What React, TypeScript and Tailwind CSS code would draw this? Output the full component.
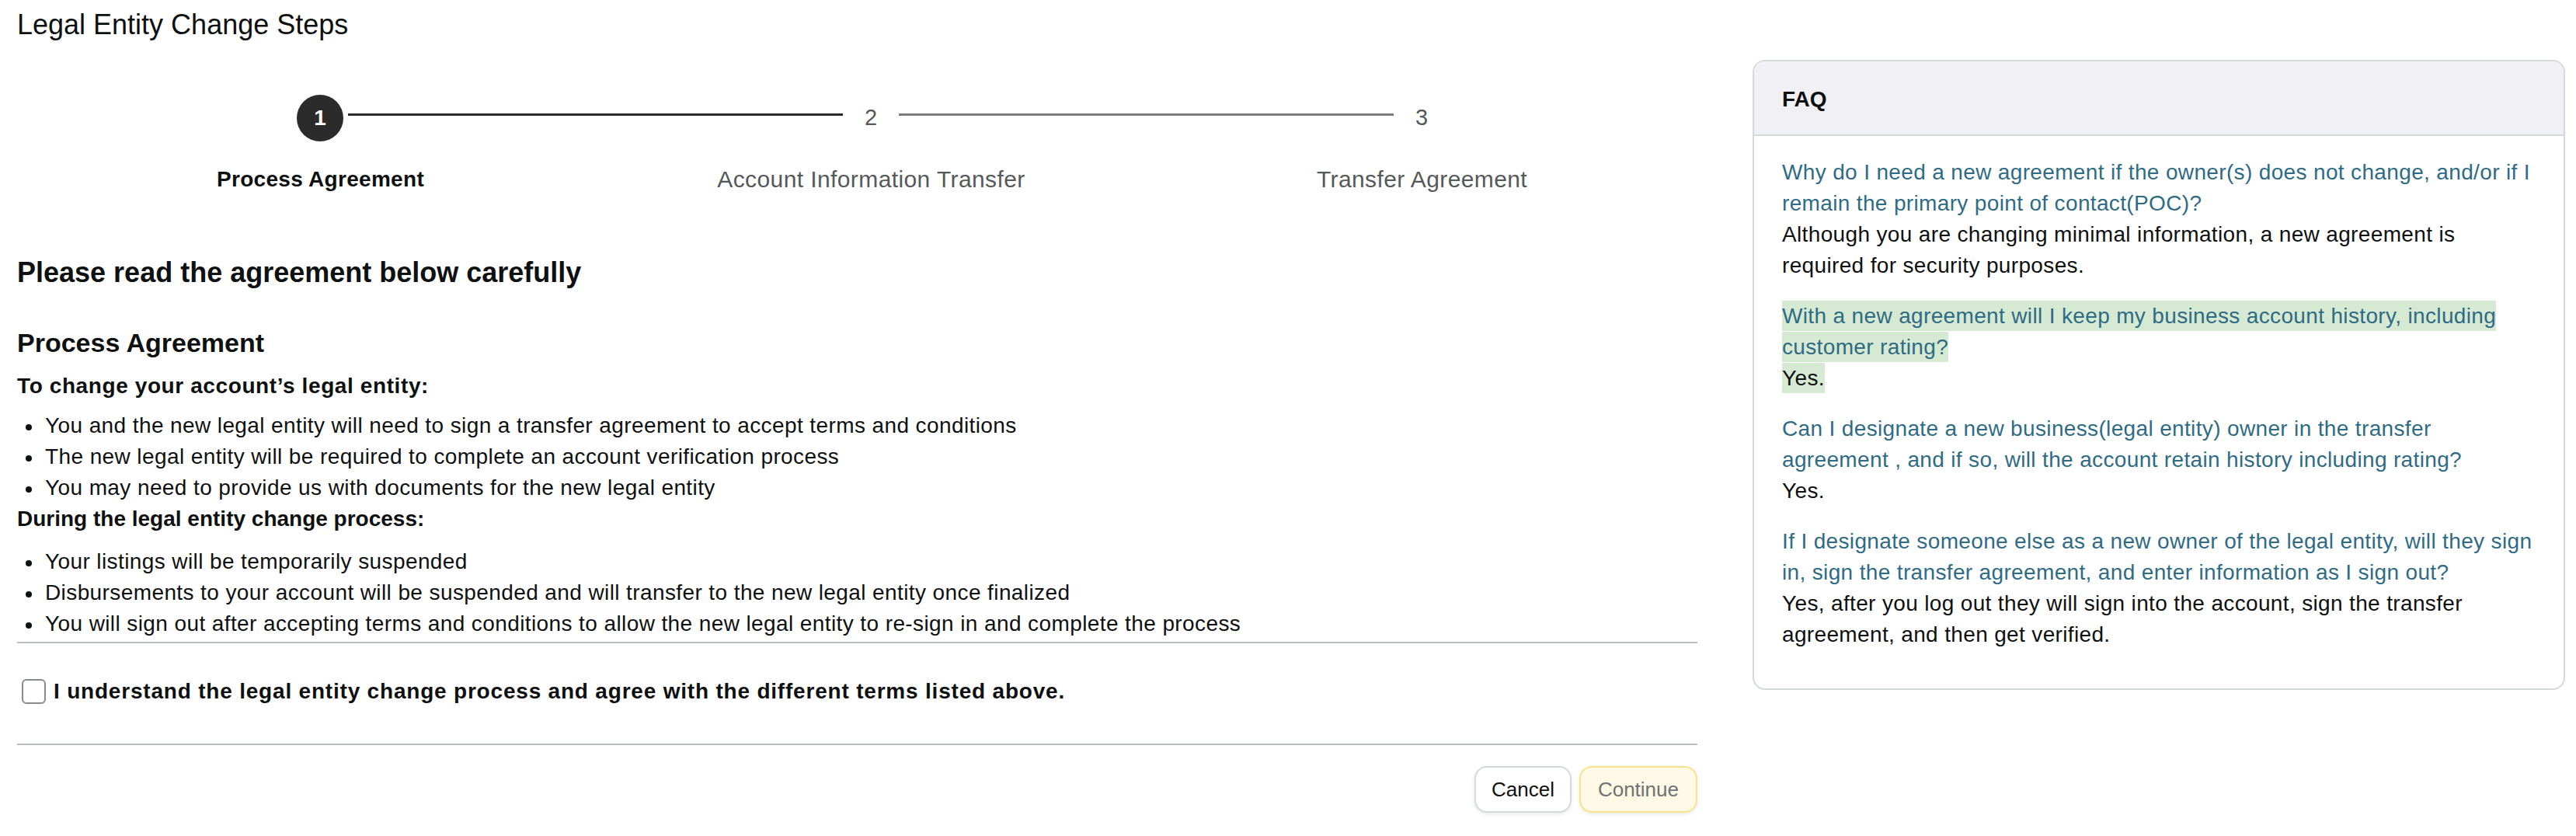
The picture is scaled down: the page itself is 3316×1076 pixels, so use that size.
import React from "react"

const steps = ["Process Agreement", "Account Information Transfer", "Transfer Agreement"]

const changeItems = [
  "You and the new legal entity will need to sign a transfer agreement to accept terms and conditions",
  "The new legal entity will be required to complete an account verification process",
  "You may need to provide us with documents for the new legal entity",
]

const processItems = [
  "Your listings will be temporarily suspended",
  "Disbursements to your account will be suspended and will transfer to the new legal entity once finalized",
  "You will sign out after accepting terms and conditions to allow the new legal entity to re-sign in and complete the process",
]

const faqs = [
  {
    q: "Why do I need a new agreement if the owner(s) does not change, and/or if I remain the primary point of contact(POC)?",
    a: "Although you are changing minimal information, a new agreement is required for security purposes.",
  },
  {
    q: "With a new agreement will I keep my business account history, including customer rating?",
    a: "Yes.",
    highlight: true,
  },
  {
    q: "Can I designate a new business(legal entity) owner in the transfer agreement , and if so, will the account retain history including rating?",
    a: "Yes.",
  },
  {
    q: "If I designate someone else as a new owner of the legal entity, will they sign in, sign the transfer agreement, and enter information as I sign out?",
    a: "Yes, after you log out they will sign into the account, sign the transfer agreement, and then get verified.",
  },
]

function BulletList({ items, className = "" }: { items: string[]; className?: string }) {
  return (
    <ul className={className}>
      {items.map((item) => (
        <li key={item} className="flex leading-[40px] tracking-[0.4px]">
          <span className="w-[36px] shrink-0 pl-[11px] pt-[18px]">
            <span className="block h-[8px] w-[8px] rounded-full bg-[#0f1111]" />
          </span>
          <span>{item}</span>
        </li>
      ))}
    </ul>
  )
}

function Stepper() {
  return (
    <div className="mt-[66px]">
      <div className="ml-[360px] flex h-[60px] items-center">
        <div className="flex h-[60px] w-[60px] items-center justify-center rounded-full bg-[#2b2b2b] text-[28px] font-bold text-white">
          1
        </div>
        <div className="mx-[6px] mb-[9px] h-[3px] w-[637px] bg-[#2b2b2b]" />
        <div className="w-[60px] text-center text-[29px] text-[#565959]">2</div>
        <div className="mx-[6px] mb-[9px] h-[3px] w-[637px] bg-[#7d7d7d]" />
        <div className="w-[60px] text-center text-[29px] text-[#565959]">3</div>
      </div>
      <div className="ml-[36px] mt-[29px] grid w-[2127px] grid-cols-3 text-center leading-[40px]">
        {steps.map((s, i) => (
          <div
            key={s}
            className={
              i === 0
                ? "text-[28px] font-bold tracking-[0.3px] text-[#0f1111]"
                : "text-[30px] tracking-[0.4px] text-[#565959]"
            }
          >
            {s}
          </div>
        ))}
      </div>
    </div>
  )
}

function FaqCard() {
  return (
    <aside className="mt-[69px] w-[1046px] overflow-hidden rounded-[16px] border-2 border-[#d5d9d9] bg-white">
      <div className="border-b-2 border-[#d5d9d9] bg-[#f1f1f5] pb-[25px] pl-[36px] pt-[29px] text-[28px] font-bold leading-[40px]">
        FAQ
      </div>
      <div className="pb-[24px] pl-[36px] pr-[30px] pt-[27px] text-[28px] leading-[40px] tracking-[0.35px]">
        {faqs.map((f) => (
          <div key={f.q} className="mb-[25px]">
            <div className="text-[#2f6b85]">
              <span className={f.highlight ? "bg-[#d6e9d3] py-[4px] box-decoration-clone" : ""}>{f.q}</span>
            </div>
            <div className="text-[#0f1111]">
              <span className={f.highlight ? "bg-[#d6e9d3] py-[4px] box-decoration-clone" : ""}>{f.a}</span>
            </div>
          </div>
        ))}
      </div>
    </aside>
  )
}

export default function App() {
  return (
    <div className="min-h-screen bg-white pl-[22px] pt-[8px] font-['Liberation_Sans',Arial,sans-serif] text-[28px] text-[#0f1111]">
      <div className="flex items-start gap-[71px]">
        <div className="w-[2163px]">
          <h1 className="text-[36px] leading-[48px]">Legal Entity Change Steps</h1>

          <Stepper />

          <h2 className="mt-[76px] text-[36px] font-bold leading-[48px]">Please read the agreement below carefully</h2>
          <h3 className="mt-[42px] text-[34px] font-bold leading-[48px]">Process Agreement</h3>

          <p className="mt-[12px] font-bold leading-[40px] tracking-[0.6px]">To change your account’s legal entity:</p>
          <BulletList items={changeItems} className="mt-[11px]" />
          <p className="font-bold leading-[40px]">During the legal entity change process:</p>
          <BulletList items={processItems} className="mt-[15px]" />

          <hr className="mt-[3px] border-t-2 border-[#bbbfbf]" />

          <label className="mt-[42px] flex h-[40px] items-center">
            <input
              type="checkbox"
              className="ml-[6px] h-[32px] w-[31px] appearance-none rounded-[6px] border-2 border-[#888c8c] bg-white"
            />
            <span className="ml-[10px] font-bold leading-[40px] tracking-[0.8px]">
              I understand the legal entity change process and agree with the different terms listed above.
            </span>
          </label>

          <hr className="mt-[47px] border-t-2 border-[#bbbfbf]" />

          <div className="mt-[27px] flex justify-end gap-[10px]">
            <button className="h-[60px] rounded-[16px] border-2 border-[#d5d9d9] bg-white px-[20px] text-[26px] text-[#0f1111] shadow-[0_2px_5px_rgba(213,217,217,0.5)]">
              Cancel
            </button>
            <button className="h-[60px] rounded-[16px] border-2 border-[#f7e48a] bg-[#fef8e6] px-[22px] text-[26px] text-[#6f7373] shadow-[0_2px_5px_rgba(213,217,217,0.5)]">
              Continue
            </button>
          </div>
        </div>

        <FaqCard />
      </div>
    </div>
  )
}
